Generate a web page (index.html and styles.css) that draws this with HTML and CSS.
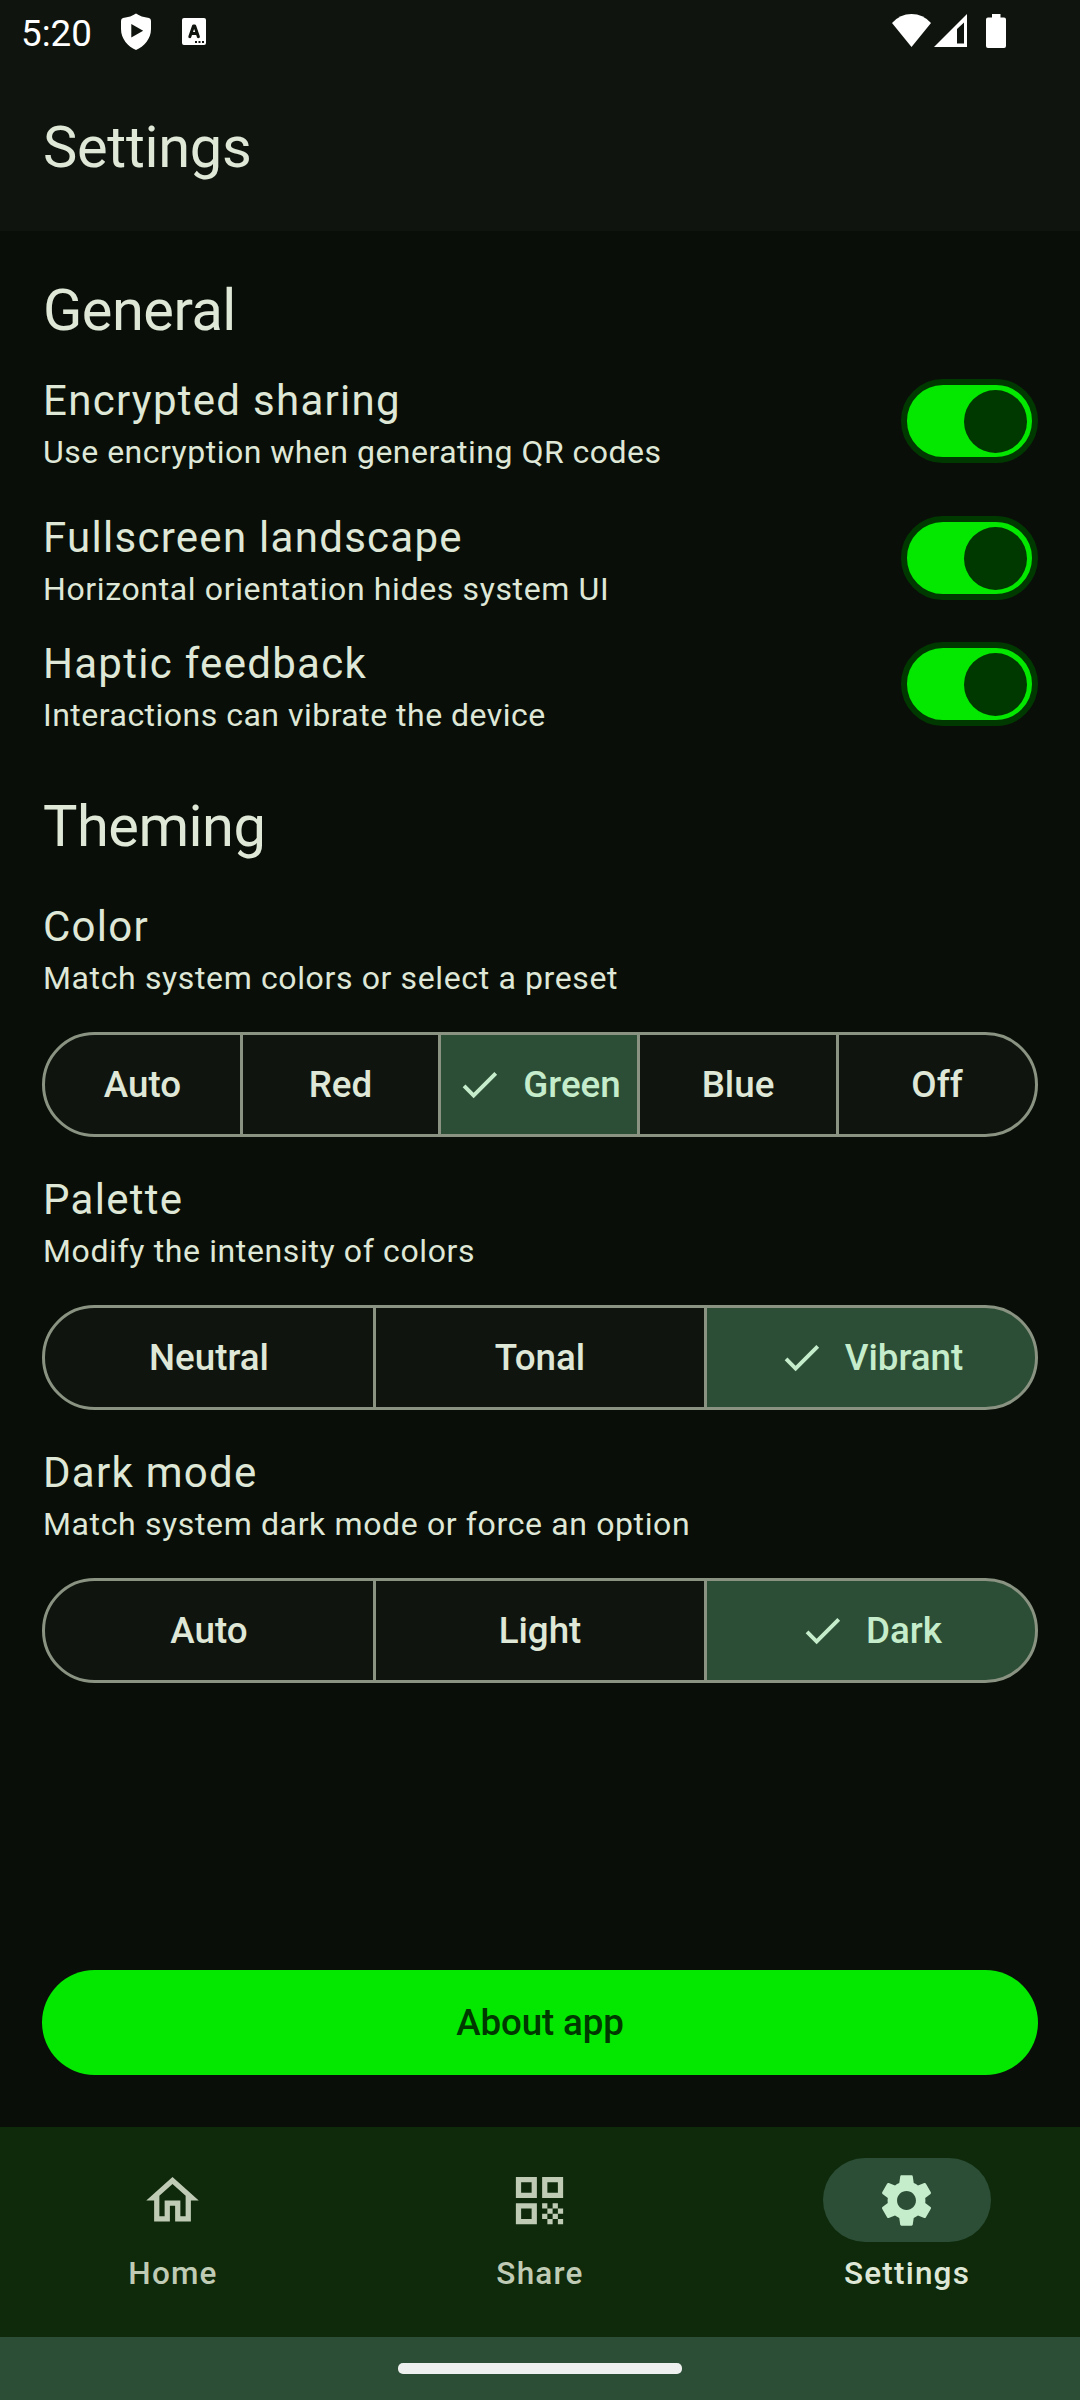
FILE: index.html
```html
<!DOCTYPE html>
<html lang="en">
<head>
<meta charset="utf-8">
<title>Settings</title>
<link rel="stylesheet" href="styles.css">
</head>
<body>
<div class="screen">
  <header class="top">
    <div class="status">
      <span class="clock">5:20</span>
      <svg class="shield" viewBox="0 0 30 37"><path fill-rule="evenodd" d="M15 0.5Q20 4 28 5Q30 5.500 30 8V16C30 26 23 33.500 15 37C7 33.500 0 26 0 16V8Q0 5.500 2 5Q10 4 15 0.500ZM10.300 11V24.500L22.200 17.700Z"/></svg>
      <svg class="keyboard" viewBox="0 0 24 27"><path fill-rule="evenodd" d="M2 0H22Q24 0 24 2V25Q24 27 22 27H2Q0 27 0 25V2Q0 0 2 0ZM13 23V25H15V23ZM16.500 23V25H18.500V23ZM20 23V25H22V23Z"/><path class="stroke" d="M7.800 18.700L11.500 8H12.700L16.400 18.700M9 15.500H15"/></svg>
      <span class="grow"></span>
      <svg class="wifi" viewBox="0 0 39 33"><path d="M0 9Q8 0 19.500 0T39 9L19.500 33Z"/></svg>
      <svg class="signal" viewBox="0 0 33 33"><path fill-rule="evenodd" d="M33 0V33H0ZM30 8.500L23 15V29.500H30Z"/></svg>
      <svg class="battery" viewBox="0 0 20 34"><path d="M6 0H14.500V3.500H18Q20 3.500 20 5.500V32Q20 34 18 34H2Q0 34 0 32V5.500Q0 3.500 2 3.500H6Z"/></svg>
    </div>
    <h1>Settings</h1>
  </header>

  <main>
    <h2 class="general">General</h2>
    <div class="toggles">
      <div class="row row-spaced"><div><h3>Encrypted sharing</h3><p class="snug">Use encryption when generating QR codes</p></div><span class="switch"><i></i></span></div>
      <div class="row"><div><h3>Fullscreen landscape</h3><p>Horizontal orientation hides system UI</p></div><span class="switch"><i></i></span></div>
      <div class="row"><div><h3>Haptic feedback</h3><p class="snug">Interactions can vibrate the device</p></div><span class="switch"><i></i></span></div>
    </div>

    <h2 class="theming">Theming</h2>
    <section class="option">
      <h3>Color</h3>
      <p>Match system colors or select a preset</p>
      <div class="segments five">
        <button>Auto</button><button>Red</button><button class="on"><svg viewBox="0 0 24 24"><path d="M9 16.170L4.830 12L3.410 13.410L9 19L21 7L19.590 5.590Z"/></svg>Green</button><button>Blue</button><button>Off</button>
      </div>
    </section>
    <section class="option">
      <h3>Palette</h3>
      <p>Modify the intensity of colors</p>
      <div class="segments three">
        <button>Neutral</button><button>Tonal</button><button class="on"><svg viewBox="0 0 24 24"><path d="M9 16.170L4.830 12L3.410 13.410L9 19L21 7L19.590 5.590Z"/></svg>Vibrant</button>
      </div>
    </section>
    <section class="option">
      <h3>Dark mode</h3>
      <p>Match system dark mode or force an option</p>
      <div class="segments three">
        <button>Auto</button><button>Light</button><button class="on"><svg viewBox="0 0 24 24"><path d="M9 16.170L4.830 12L3.410 13.410L9 19L21 7L19.590 5.590Z"/></svg>Dark</button>
      </div>
    </section>
    <button class="about">About app</button>
  </main>

  <nav>
    <a><span class="pill"><svg viewBox="0 0 24 24"><path d="M12 5.690l5 4.500V18h-2v-6H9v6H7v-7.810l5-4.500M12 3L2 12h3v8h6v-6h2v6h6v-8h3L12 3z"/></svg></span>Home</a>
    <a><span class="pill"><svg viewBox="0 0 24 24"><path d="M3 11h8V3H3v8zm2-6h4v4H5V5zM3 21h8v-8H3v8zm2-6h4v4H5v-4zM13 3v8h8V3h-8zm6 6h-4V5h4v4zM19 19h2v2h-2zM13 13h2v2h-2zM15 15h2v2h-2zM13 17h2v2h-2zM15 19h2v2h-2zM17 17h2v2h-2zM17 13h2v2h-2zM19 15h2v2h-2z"/></svg></span>Share</a>
    <a class="active"><span class="pill"><svg viewBox="0 0 24 24"><path d="M19.140 12.940c.040-.300.060-.610.060-.940 0-.320-.020-.640-.070-.940l2.030-1.580c.180-.140.230-.410.120-.610l-1.920-3.320c-.120-.220-.370-.290-.590-.220l-2.390.960c-.500-.380-1.030-.700-1.620-.940l-.360-2.540c-.040-.240-.240-.410-.480-.410h-3.840c-.240 0-.430.170-.470.410l-.360 2.540c-.590.240-1.130.570-1.620.940l-2.390-.960c-.220-.080-.470 0-.590.220L2.740 8.870c-.120.210-.080.470.120.610l2.030 1.580c-.050.300-.090.630-.090.940s.020.640.070.940l-2.030 1.580c-.180.140-.230.410-.120.610l1.920 3.320c.120.220.370.290.590.220l2.390-.960c.500.380 1.030.700 1.620.940l.360 2.540c.050.240.240.410.480.410h3.840c.240 0 .440-.170.470-.410l.360-2.540c.590-.240 1.130-.560 1.620-.940l2.390.960c.220.080.470 0 .590-.220l1.920-3.320c.120-.220.070-.470-.120-.610l-2.010-1.580zM12 15.600c-1.980 0-3.600-1.620-3.600-3.600s1.620-3.600 3.600-3.600 3.600 1.620 3.600 3.600-1.620 3.600-3.600 3.600z"/></svg></span>Settings</a>
  </nav>
  <div class="gesture"><span></span></div>
</div>
</body>
</html>
```
FILE: styles.css
```css
* { box-sizing: border-box; margin: 0; padding: 0; }
body { width: 1080px; height: 2400px; background: #090f08; color: #dfe7d7; font-family: Roboto, sans-serif; }
.screen { height: 2400px; display: flex; flex-direction: column; overflow: hidden; }
svg { display: block; fill: currentColor; flex: none; }
button { font: inherit; color: inherit; border: 0; background: none; }

.top { height: 231px; background: #0f150e; flex: none; }
.status { height: 63px; display: flex; padding: 0 74px 0 21px; color: #fff; }
.clock { font-size: 36.750px; line-height: 43px; margin-top: 12px; width: 100px; white-space: nowrap; }
.grow { flex: 1; }
.shield { width: 30px; height: 37px; margin-top: 13px; }
.keyboard { width: 24px; height: 27px; margin: 18px 0 0 31px; }
.keyboard .stroke { fill: none; stroke: #0f150e; stroke-width: 3; stroke-linecap: round; stroke-linejoin: round; }
.wifi { width: 39px; height: 33px; margin-top: 14px; }
.signal { width: 33px; height: 33px; margin: 14px 0 0 3px; }
.battery { width: 20px; height: 34px; margin: 14px 0 0 19px; }
h1, h2 { font-weight: 400; font-size: 57.750px; line-height: 68px; letter-spacing: -0.500px; }
h1 { padding: 50px 43px 0; letter-spacing: -0.300px; }

main { flex: 1; padding: 0 42px; display: flex; flex-direction: column; }
h2, h3, p { padding-left: 1px; }
.general { margin-top: 45px; }
.toggles { margin-top: 14px; }
.row { display: flex; justify-content: space-between; align-items: center; height: 126px; }
.row-spaced { margin-bottom: 11px; }
h3 { font-weight: 400; font-size: 42px; line-height: 49px; letter-spacing: 1.280px; }
p { font-size: 32px; line-height: 43px; letter-spacing: 0.630px; margin-top: 6px; white-space: nowrap; }
.snug { letter-spacing: 0.490px; }
.row > div { margin-top: 8px; }
.switch { width: 137px; height: 84px; border: 6px solid #003900; border-radius: 42px; background: #04e800; padding: 5px; display: flex; justify-content: flex-end; }
.switch i { width: 63px; height: 63px; border-radius: 50%; background: #003900; }

.theming { margin-top: 45px; }
.option { height: 273px; }
.theming + .option { margin-top: 42px; }
.segments { display: grid; height: 105px; margin-top: 32px; }
.five { grid-template-columns: 198px 198px 199px 199px 199px; }
.three { grid-template-columns: 331px 331px 331px; }
.segments button { min-width: 0; height: 105px; margin-right: -3px; border: 3px solid #8a9382; background: #0f150e; display: flex; align-items: center; justify-content: center; font-weight: 500; font-size: 36.750px; white-space: nowrap; }
.segments button:first-child { border-radius: 52.500px 0 0 52.500px; }
.segments button:last-child { border-radius: 0 52.500px 52.500px 0; }
.segments .on { background: #2c4e36; color: #c5eccb; }
.segments svg { width: 47px; height: 47px; margin-left: -1px; margin-right: 20px; }
.about { margin-top: auto; margin-bottom: 52px; height: 105px; border-radius: 53px; background: #04e800; color: #003900; font-weight: 500; font-size: 36.750px; letter-spacing: -0.150px; flex: none; }

nav { height: 210px; background: #0e2a0b; display: flex; padding: 31px 5px 0; flex: none; justify-content: space-between; }
nav a { width: 336px; display: flex; flex-direction: column; align-items: center; font-size: 31.500px; line-height: 43px; font-weight: 500; letter-spacing: 1.200px; color: #c0cbb6; }
.pill { width: 168px; height: 84px; border-radius: 42px; display: flex; align-items: center; justify-content: center; margin-bottom: 10px; }
.pill svg { width: 63px; height: 63px; margin-right: 1px; }
.active { color: #dfe7d7; }
.active .pill { background: #2c4e36; color: #c5eccb; }
.gesture { height: 63px; background: #2c4e36; flex: none; display: flex; justify-content: center; padding-top: 26px; }
.gesture span { width: 284px; height: 11px; border-radius: 5px; background: #eef0ef; }
```
